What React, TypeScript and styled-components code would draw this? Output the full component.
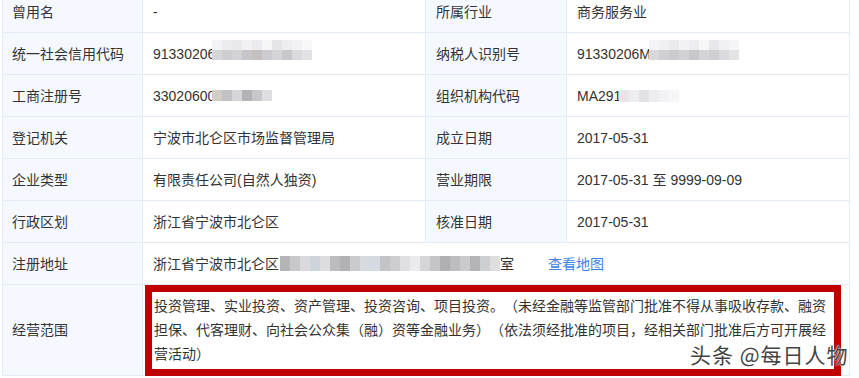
import React from "react";
import styled, { createGlobalStyle } from "styled-components";

const GlobalStyle = createGlobalStyle`
  html, body {
    margin: 0;
    padding: 0;
    background: #ffffff;
    overflow: hidden;
  }
  body {
    font-family: "Liberation Sans", "Noto Sans CJK SC", sans-serif;
    font-size: 14px;
    color: #333333;
    text-spacing-trim: space-all;
  }
`;

const Page = styled.div`
  position: relative;
  width: 859px;
  height: 378px;
  overflow: hidden;
  padding-left: 2px;
  box-sizing: border-box;
`;

const Grid = styled.div`
  display: grid;
  grid-template-columns: 139px 282px 140px 282px;
  grid-template-rows: repeat(7, 41px) 90px;
  gap: 1px;
  padding: 1px;
  width: max-content;
  margin-top: -10px;
  background: #e3ebf8;
`;

const Cell = styled.div<{ $label?: boolean; $span?: number; $pad?: number }>`
  display: flex;
  align-items: center;
  background: ${(p) => (p.$label ? "#f5f9ff" : "#ffffff")};
  padding: 0 0 0 ${(p) => (p.$pad ?? 10)}px;
  grid-column: ${(p) => (p.$span ? `span ${p.$span}` : "auto")};
  white-space: nowrap;
  line-height: 20px;
  min-width: 0;
`;

const ScopeCell = styled.div`
  grid-column: span 3;
  background: #ffffff;
  display: flex;
  align-items: flex-start;
`;

const Highlight = styled.div`
  box-sizing: border-box;
  width: 696px;
  height: 91px;
  margin-left: 2px;
  border: 7px solid #c00000;
  padding: 1px 0 0 2px;
  line-height: 24px;
  font-family: "Noto Sans CJK SC", "Liberation Sans", sans-serif;
  white-space: normal;
`;

const MapLink = styled.span`
  color: #3b82e6;
  margin-left: 34px;
`;

const MosaicBox = styled.span<{ $lift: number; $ml: number }>`
  display: inline-flex;
  flex-direction: column;
  margin-left: ${(p) => p.$ml}px;
  margin-bottom: ${(p) => p.$lift}px;
`;

const MosaicRow = styled.span`
  display: flex;
`;

const Tile = styled.span<{ $c: string; $w: number; $h: number }>`
  display: block;
  width: ${(p) => p.$w}px;
  height: ${(p) => p.$h}px;
  background: ${(p) => p.$c};
`;

const Watermark = styled.div`
  position: absolute;
  left: 690px;
  top: 340px;
  font-family: "Noto Sans CJK SC", sans-serif;
  font-size: 21px;
  line-height: 28px;
  color: #444444;
  letter-spacing: 1px;
  text-shadow: 0 0 2px #ffffff, 0 0 1px #ffffff;
  white-space: nowrap;
`;

type MosaicProps = { rows: string[][]; w: number; h: number; lift?: number; ml?: number };

const Mosaic = ({ rows, w, h, lift = 0, ml = 0 }: MosaicProps) => (
  <MosaicBox $lift={lift} $ml={ml}>
    {rows.map((r, i) => (
      <MosaicRow key={i}>
        {r.map((c, j) => (
          <Tile key={j} $c={c} $w={w} $h={h} />
        ))}
      </MosaicRow>
    ))}
  </MosaicBox>
);

const creditRows = [
  ["#f3f3f5", "#ececef", "#e9e9ec", "#f1f1f3", "#ebebee", "#f6f6f7", "#e5e5e8", "#eeeef0", "#f2f2f4", "#f8f8f9"],
  ["#d6d6da", "#cdcdd2", "#d3d3d7", "#c6c6ca", "#c4c0bf", "#cdcad0", "#d5d5d9", "#c8c8cc", "#dadade", "#e3e3e6"],
];

const regRows = [["#d2ccc7", "#c2c2c6", "#d6d6da", "#b3b3b7", "#c7c7cb", "#dedee2"]];

const taxRows = [
  ["#f4f4f6", "#f0f0f2", "#eaeaed", "#f2f2f4", "#ededf0", "#f7f7f8", "#e8e8eb", "#f1f1f3", "#f5f5f7"],
  ["#d9d9dd", "#d0d0d4", "#cbcbcf", "#d2d2d6", "#c8c8cc", "#d4d4d8", "#cecfd3", "#dadade", "#e4e4e7"],
];

const orgRows = [["#e6e6ea", "#eeeef1", "#e2e2e6", "#ececef", "#f2f2f4", "#f7f7f9"]];

const addrRows = [
  [
    "#b4b4b8", "#c8c8cc", "#dadade", "#cfd3da", "#dddde1", "#bcbcc0", "#b2b2b6", "#cbcbcf",
    "#d8dae0", "#d4d9e2", "#c4c4c8", "#cdcdd1", "#e0e0e4", "#ebebed", "#d5d5d9", "#c5c5c9",
    "#afafb3", "#bdbdc1", "#cacace", "#b4b4b8", "#cecfd2", "#dededf",
  ],
];

export default function App() {
  return (
    <>
      <GlobalStyle />
      <Page>
        <Grid>
          <Cell $label $pad={9}>曾用名</Cell>
          <Cell>-</Cell>
          <Cell $label>所属行业</Cell>
          <Cell>商务服务业</Cell>

          <Cell $label $pad={9}>统一社会信用代码</Cell>
          <Cell>
            <span>91330206</span>
            <Mosaic rows={creditRows} w={10} h={10} lift={7} ml={-3} />
          </Cell>
          <Cell $label>纳税人识别号</Cell>
          <Cell>
            <span>91330206M</span>
            <Mosaic rows={taxRows} w={10} h={10} lift={7} ml={-2} />
          </Cell>

          <Cell $label $pad={9}>工商注册号</Cell>
          <Cell>
            <span>33020600</span>
            <Mosaic rows={regRows} w={10} h={11} ml={-3} />
          </Cell>
          <Cell $label>组织机构代码</Cell>
          <Cell>
            <span>MA291</span>
            <Mosaic rows={orgRows} w={10} h={12} ml={-2} />
          </Cell>

          <Cell $label $pad={9}>登记机关</Cell>
          <Cell>宁波市北仑区市场监督管理局</Cell>
          <Cell $label>成立日期</Cell>
          <Cell>2017-05-31</Cell>

          <Cell $label $pad={9}>企业类型</Cell>
          <Cell>有限责任公司(自然人独资)</Cell>
          <Cell $label>营业期限</Cell>
          <Cell>2017-05-31 至 9999-09-09</Cell>

          <Cell $label $pad={9}>行政区划</Cell>
          <Cell>浙江省宁波市北仑区</Cell>
          <Cell $label>核准日期</Cell>
          <Cell>2017-05-31</Cell>

          <Cell $label $pad={9}>注册地址</Cell>
          <Cell $span={3}>
            <span>浙江省宁波市北仑区</span>
            <Mosaic rows={addrRows} w={10} h={15} ml={1} />
            <span>室</span>
            <MapLink>查看地图</MapLink>
          </Cell>

          <Cell $label $pad={9}>经营范围</Cell>
          <ScopeCell>
            <Highlight>
              投资管理、实业投资、资产管理、投资咨询、项目投资。（未经金融等监管部门批准不得从事吸收存款、融资担保、代客理财、向社会公众集（融）资等金融业务）（依法须经批准的项目，经相关部门批准后方可开展经营活动）
            </Highlight>
          </ScopeCell>
        </Grid>
        <Watermark>头条 @每日人物</Watermark>
      </Page>
    </>
  );
}
